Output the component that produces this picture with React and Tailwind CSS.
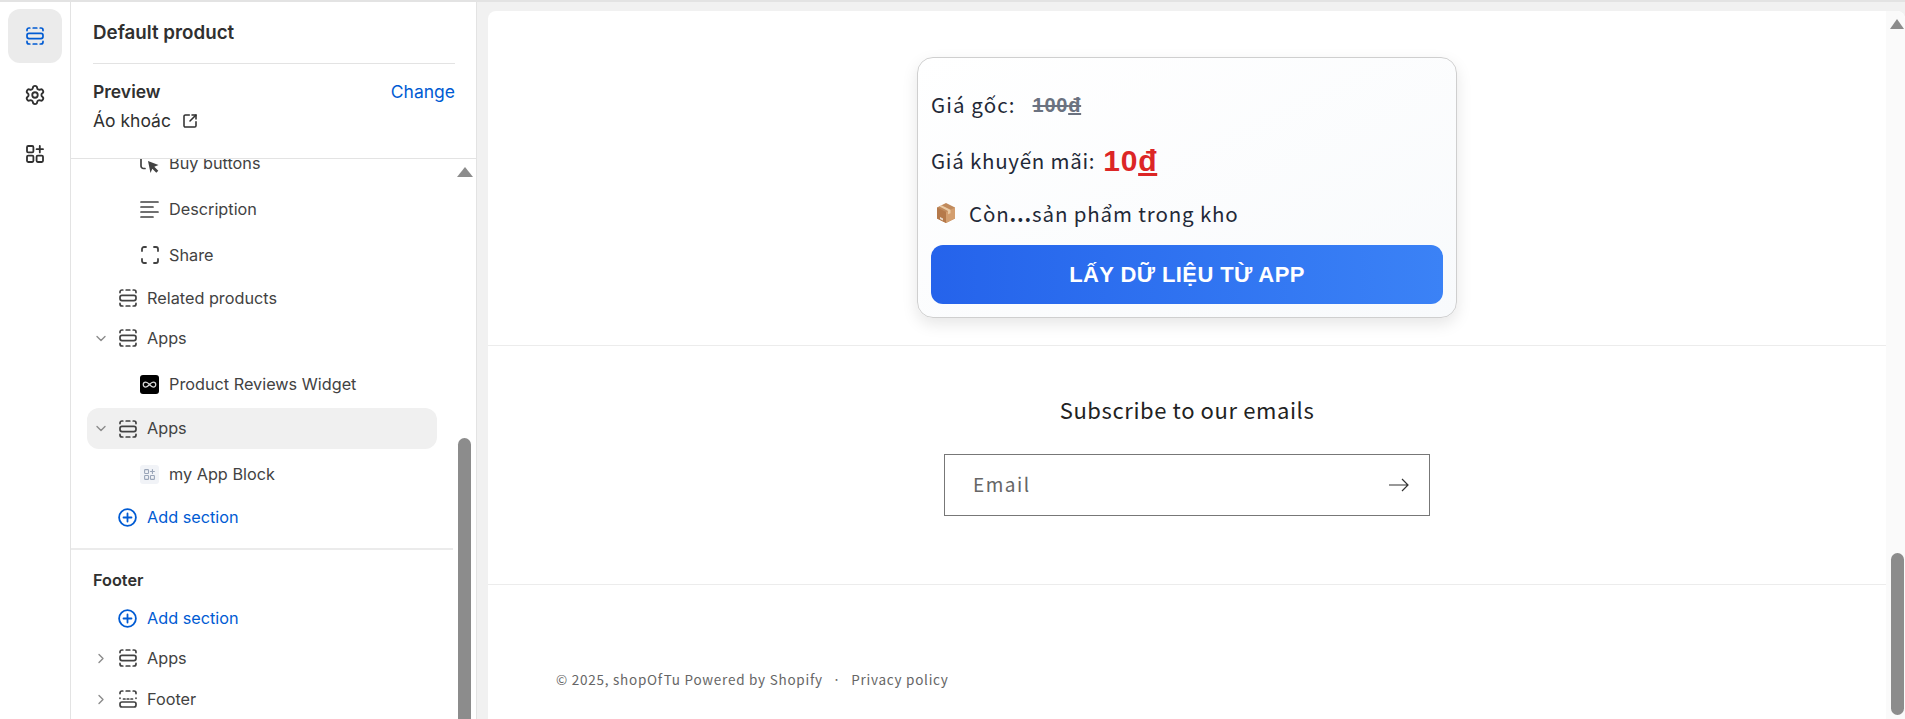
import React from "react";
import { ChevronDown, ChevronRight, Settings, SquareArrowOutUpRight, Infinity as InfinityIcon } from "lucide-react";

function SectionIcon({ className = "text-[#424242]" }) {
  return (
    <svg viewBox="0 0 18 18" fill="none" stroke="currentColor" strokeWidth="1.7" strokeLinecap="round" className={`w-[18px] h-[18px] shrink-0 ${className}`}>
      <path d="M1 3.6V3a2 2 0 0 1 2-2h.8M7.2 1h3.6M14.2 1h.8a2 2 0 0 1 2 2v.6" />
      <rect x="1" y="6.4" width="16" height="5.2" rx="2" />
      <path d="M1 14.4v.6a2 2 0 0 0 2 2h.8M7.2 17h3.6M14.2 17h.8a2 2 0 0 0 2-2v-.6" />
    </svg>
  );
}

function FooterIcon() {
  return (
    <svg viewBox="0 0 18 18" fill="none" stroke="currentColor" strokeWidth="1.7" strokeLinecap="round" className="w-[18px] h-[18px] shrink-0 text-[#424242]">
      <path d="M1 3.6V3a2 2 0 0 1 2-2h.8M7.200 1h3.600M14.200 1h.8a2 2 0 0 1 2 2v.6M1 8v.3M17 8v.3M4.500 9h1.500M8.200 9h1.600M12 9h1.500" />
      <rect x="1" y="12" width="16" height="5" rx="2" />
    </svg>
  );
}

function AppsPlus({ className }) {
  return (
    <svg viewBox="0 0 18 18" fill="none" stroke="currentColor" strokeWidth="1.8" strokeLinecap="round" className={className}>
      <rect x="1" y="1" width="6.4" height="6.4" rx="1.2" />
      <rect x="1" y="10.600" width="6.4" height="6.4" rx="1.2" />
      <rect x="10.600" y="10.600" width="6.4" height="6.4" rx="1.2" />
      <path d="M13.800 1v6.400M10.600 4.200H17" />
    </svg>
  );
}

function CursorIcon() {
  return (
    <svg viewBox="0 0 19 19" className="w-[19px] h-[19px] text-[#424242]" fill="none" stroke="currentColor" strokeWidth="1.7" strokeLinecap="round">
      <path d="M7 1H3.500A2.500 2.500 0 0 0 1 3.500v8.500A2.500 2.500 0 0 0 3.500 14.500H5" />
      <path d="M8 7l10.500 4-4.200 1.700 4 4-2 2-4-4-1.800 4.300z" fill="currentColor" stroke="none" />
    </svg>
  );
}

function LinesIcon() {
  return (
    <svg viewBox="0 0 19 19" className="w-[19px] h-[19px] text-[#424242]" fill="none" stroke="currentColor" strokeWidth="1.7" strokeLinecap="round">
      <path d="M1 2h17M1 7h12M1 12h17M1 17h12" />
    </svg>
  );
}

function ShareIcon() {
  return (
    <svg viewBox="0 0 18 18" className="w-[18px] h-[18px] text-[#424242]" fill="none" stroke="currentColor" strokeWidth="1.8" strokeLinecap="round">
      <path d="M1 5V3a2 2 0 0 1 2-2h2M13 1h2a2 2 0 0 1 2 2v2M17 13v2a2 2 0 0 1-2 2h-2M5 17H3a2 2 0 0 1-2-2v-2" />
    </svg>
  );
}

function PlusCircle() {
  return (
    <svg viewBox="0 0 19 19" className="w-[19px] h-[19px] shrink-0 text-[#005bd3]" fill="none" stroke="currentColor" strokeWidth="1.8" strokeLinecap="round">
      <circle cx="9.500" cy="9.500" r="8.400" />
      <path d="M9.500 5.500v8M5.500 9.500h8" />
    </svg>
  );
}

function BoxEmoji() {
  return (
    <svg viewBox="0 0 20 22" className="w-[20px] h-[22px] shrink-0">
      <path d="M10 1l9 4.500v11L10 21l-9-4.500v-11z" fill="#c08a5c" />
      <path d="M1 5.500L10 10v11l-9-4.500z" fill="#b5794a" />
      <path d="M10 10l9-4.500v11L10 21z" fill="#d39e6f" />
      <path d="M5.500 3.200l9 4.600v3.500l-2.500 1V9L3.500 4.500z" fill="#eacaa4" />
      <path d="M4 15l3 1.500v2L4 17z" fill="#e8dccf" />
    </svg>
  );
}

function SectionRow({ label, open, icon, height, active }) {
  return (
    <div className={`ml-[16px] w-[350px] flex items-center pl-[6px] rounded-[12px] ${height} ${active ? "bg-[#f0f0f0]" : ""}`}>
      <span className="w-[16px] flex justify-center text-[#8a8a8a]">
        {open === true && <ChevronDown size={17} strokeWidth={2} />}
        {open === false && <ChevronRight size={17} strokeWidth={2} />}
      </span>
      <span className="ml-[10px]">{icon || <SectionIcon />}</span>
      <span className="ml-[10px] text-[#424242]">{label}</span>
    </div>
  );
}

function SubRow({ label, icon, height = "h-[46px]" }) {
  return (
    <div className={`pl-[69px] flex items-center ${height}`}>
      <span className="w-[19px] flex justify-center shrink-0">{icon}</span>
      <span className="ml-[10px] text-[#424242]">{label}</span>
    </div>
  );
}

function AddRow() {
  return (
    <div className="pl-[47px] h-[40px] flex items-center text-[#005bd3]">
      <PlusCircle />
      <span className="ml-[10px]">Add section</span>
    </div>
  );
}

export default function App() {
  return (
    <div className="h-[719px] w-[1905px] overflow-hidden flex border-t-2 border-[#e3e3e3] bg-[#f1f1f1] font-['Inter',sans-serif] text-[16.25px]">
      <nav className="w-[71px] shrink-0 bg-white border-r border-[#e3e3e3] flex flex-col items-center pt-[7px]">
        <div className="w-[54px] h-[54px] rounded-[12px] bg-[#ebebeb] flex items-center justify-center">
          <SectionIcon className="text-[#005bd3]" />
        </div>
        <div className="h-[60px] w-[54px] flex items-center justify-center pt-[4px] text-[#303030]">
          <Settings size={22} strokeWidth={2} />
        </div>
        <div className="h-[60px] w-[54px] flex items-center justify-center pt-[2px]">
          <AppsPlus className="w-[18px] h-[18px] text-[#303030]" />
        </div>
      </nav>

      <aside className="w-[406px] shrink-0 bg-white border-r border-[#e3e3e3] flex flex-col overflow-hidden">
        <header className="h-[157px] shrink-0 border-b border-[#e3e3e3] pl-[22px] pr-[21px]">
          <div className="h-[62px] flex items-center pt-[2px] border-b border-[#e3e3e3] font-semibold text-[#303030] text-[18.75px]">
            Default product
          </div>
          <div className="flex items-center justify-between mt-[16px] h-[24px] text-[17.5px]">
            <span className="font-semibold text-[#303030]">Preview</span>
            <span className="text-[#005bd3]">Change</span>
          </div>
          <div className="flex items-center mt-[5px] h-[24px] text-[#303030] text-[17.5px]">
            <span>Áo khoác</span>
            <SquareArrowOutUpRight size={16} strokeWidth={2.3} className="ml-[11px]" />
          </div>
        </header>

        <div className="flex-1 flex overflow-hidden">
          <div className="w-[382px] shrink-0 -mt-[19px]">
            <SubRow label="Buy buttons" icon={<CursorIcon />} />
            <SubRow label="Description" icon={<LinesIcon />} />
            <SubRow label="Share" icon={<ShareIcon />} />
            <SectionRow label="Related products" height="h-[40px]" />
            <SectionRow label="Apps" open={true} height="h-[40px]" />
            <div className="mt-[3px]">
              <SubRow
                label="Product Reviews Widget"
                icon={
                  <span className="w-[19px] h-[19px] rounded-[3px] bg-black flex items-center justify-center text-[#d8d8d8]">
                    <InfinityIcon size={15} strokeWidth={2} />
                  </span>
                }
              />
            </div>
            <div className="mt-[1px]">
              <SectionRow label="Apps" open={true} height="h-[41px]" active />
            </div>
            <div className="mt-[2px]">
              <SubRow
                label="my App Block"
                icon={
                  <span className="w-[19px] h-[19px] rounded-[3px] bg-[#f1f3f7] flex items-center justify-center">
                    <AppsPlus className="w-[11px] h-[11px] text-[#9aa5b8]" />
                  </span>
                }
              />
            </div>
            <AddRow />
            <div className="mt-[11px] h-[2px] bg-[#ebebeb]" />
            <div className="pl-[22px] h-[48px] pt-[12px] flex items-center font-semibold text-[#303030] text-[16.25px]">Footer</div>
            <AddRow />
            <SectionRow label="Apps" open={false} height="h-[40px]" />
            <SectionRow label="Footer" open={false} height="h-[42px]" icon={<FooterIcon />} />
          </div>

          <div className="w-[13px] ml-[5px] shrink-0 flex flex-col items-center pt-[8px]">
            <div className="w-0 h-0 border-x-[8px] border-x-transparent border-b-[10px] border-b-[#8c8c8c]" />
            <div className="mt-[261px] flex-1 w-[13px] rounded-t-[7px] bg-[#8c8c8c]" />
          </div>
        </div>
      </aside>

      <main className="flex-1 ml-[11px] mt-[9px] bg-white rounded-t-[8px] flex overflow-hidden">
        <div className="flex-1 min-w-0 flex flex-col tracking-[0.75px] font-['Noto_Sans_CJK_JP',sans-serif]">
          <section className="h-[335px] shrink-0 border-b border-[#ececec] flex justify-center pt-[46px]">
            <div className="w-[540px] h-[261px] rounded-[16px] border border-[#cfcfcf] bg-gradient-to-br from-white to-[#f8fafc] shadow-[0_6px_16px_rgba(0,0,0,0.1)] px-[13px] text-[#1f2937] text-[20.5px]">
              <div className="h-[92px] flex items-center pt-[3px] -mt-[1px]">
                <span className="tracking-[1.1px]">Giá gốc:</span>
                <s className="ml-[17px] font-bold text-[#6b7280] text-[20px] font-['Liberation_Sans',sans-serif]">100<u>đ</u></s>
              </div>
              <div className="h-[22px] flex items-center">
                <span>Giá khuyến mãi:</span>
                <span className="ml-[8px] font-bold text-[#dc2626] text-[30px] font-['Liberation_Sans',sans-serif]">10<u>đ</u></span>
              </div>
              <div className="h-[22px] mt-[31px] flex items-center pl-[5px]">
                <BoxEmoji />
                <span className="ml-[13px] tracking-[0.85px]">Còn<b>...</b>sản phẩm trong kho</span>
              </div>
              <div className="mt-[21px] h-[59px] rounded-[12px] bg-gradient-to-r from-[#2563eb] to-[#3b82f6] text-white font-bold font-['Liberation_Sans',sans-serif] text-[22px] tracking-[0.4px] flex items-center justify-center">
                LẤY DỮ LIỆU TỪ APP
              </div>
            </div>
          </section>

          <section className="h-[239px] shrink-0 border-b border-[#ececec] flex flex-col items-center">
            <h2 className="h-[50px] mt-[38px] flex items-center text-[22px] tracking-[0.6px] text-[#222]">Subscribe to our emails</h2>
            <div className="mt-[20px] w-[486px] h-[62px] border border-[#777] flex items-center justify-between pl-[28px] pr-[20px] pb-[2px] text-[#666]">
              <span className="text-[19px] tracking-[1.5px]">Email</span>
              <svg viewBox="0 0 20 14" className="w-[20px] h-[14px] text-[#333] mt-[2px]" fill="none" stroke="currentColor" strokeWidth="1.2">
                <path d="M0 7h19M13 1l6 6-6 6" />
              </svg>
            </div>
          </section>

          <footer className="pl-[68px] pt-[84px] text-[13.5px] tracking-[0.75px] text-[#666] flex">
            <span>© 2025, shopOfTu Powered by Shopify</span>
            <span className="mx-[10px]">·</span>
            <span>Privacy policy</span>
          </footer>
        </div>

        <div className="w-[19px] shrink-0 bg-[#fafafa] flex flex-col items-center pt-[8px] pb-[4px]">
          <div className="w-0 h-0 border-x-[7px] border-x-transparent border-b-[10px] border-b-[#8c8c8c] ml-[3px]" />
          <div className="mt-auto w-[13px] h-[162px] ml-[3px] rounded-[7px] bg-[#8c8c8c]" />
        </div>
      </main>
    </div>
  );
}
